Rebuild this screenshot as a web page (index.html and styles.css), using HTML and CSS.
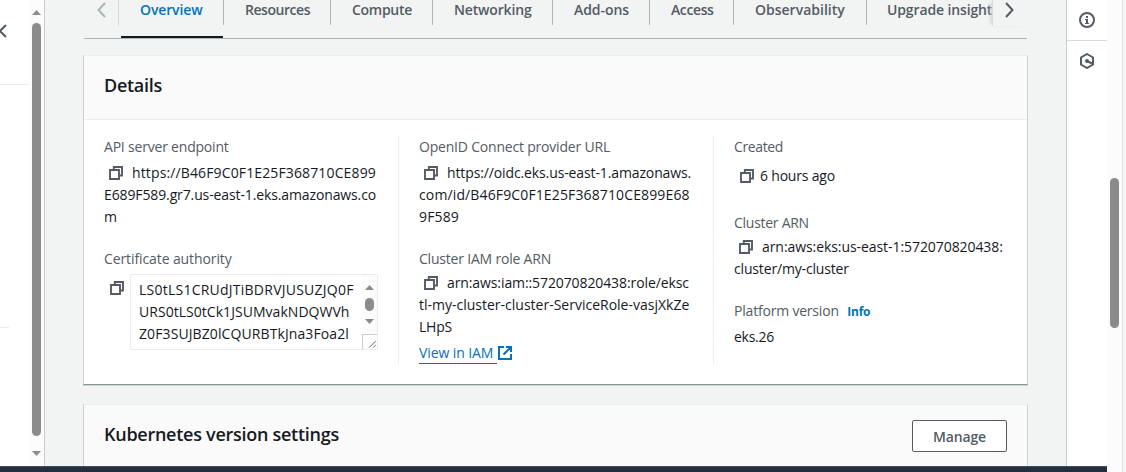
FILE: index.html
```
<!DOCTYPE html>
<html lang="en">
<head>
<meta charset="utf-8">
<title>Cluster details</title>
<link rel="stylesheet" href="styles.css">
</head>
<body>
<svg class="defs" aria-hidden="true">
  <symbol id="copy" viewBox="0 0 14 14"><path d="M1 4h9v9H1z M4.800 4V1H13v8.500h-3" fill="none" stroke="#545b64" stroke-width="1.900"/></symbol>
</svg>
<div class="app">
  <div class="workspace">
    <aside class="side">
      <div class="side-nav">
        <div class="side-head"><svg class="side-close" viewBox="0 0 9 16"><path d="M7 2L1 8l6 6" fill="none" stroke="#545b64" stroke-width="2"/></svg></div>
        <div class="side-body"></div>
      </div>
      <div class="side-scroll"><i class="arrow up"></i><i class="thumb"></i><i class="arrow down"></i></div>
    </aside>
    <main class="main">
      <nav class="tabs">
        <div class="tab-prev"><svg width="11" height="18" viewBox="0 0 11 18"><path d="M9 2L2.500 9 9 16" fill="none" stroke="#aab7b8" stroke-width="2"/></svg></div>
        <div class="tab-list">
          <a class="tab active w1 n13"><span>Overview</span></a>
          <a class="tab w2 n46"><span>Resources</span></a>
          <a class="tab w3 n30"><span>Compute</span></a>
          <a class="tab w4 n17"><span>Networking</span></a>
          <a class="tab w5 n07"><span>Add-ons</span></a>
          <a class="tab w6 n40"><span>Access</span></a>
          <a class="tab w7"><span>Observability</span></a>
          <a class="tab w8 n13"><span>Upgrade insights</span></a>
        </div>
        <div class="tab-next"><svg width="11" height="18" viewBox="0 0 11 18"><path d="M2 2l6.500 7L2 16" fill="none" stroke="#545b64" stroke-width="2"/></svg></div>
      </nav>
      <section class="card">
        <header class="card-head"><h2 class="n27">Details</h2></header>
        <div class="columns">
          <div class="col">
            <div class="label n20">API server endpoint</div>
            <div class="value">
              <div class="line p13"><svg class="copy"><use href="#copy"/></svg>https://B46F9C0F1E25F368710CE899</div>
              <div class="line n12">E689F589.gr7.us-east-1.eks.amazonaws.co</div>
              <div class="line">m</div>
            </div>
            <div class="label next n10">Certificate authority</div>
            <div class="cert">
              <svg class="copy"><use href="#copy"/></svg>
              <div class="area">
                <div class="area-text">
                  <div class="line p24">LS0tLS1CRUdJTiBDRVJUSUZJQ0F</div>
                  <div class="line p04">URS0tLS0tCk1JSUMvakNDQWVh</div>
                  <div class="line p10">Z0F3SUJBZ0lCQURBTkJna3Foa2l</div>
                </div>
                <div class="area-scroll"><i class="arrow up"></i><i class="thumb"></i><i class="arrow down"></i>
                  <svg class="grip" viewBox="0 0 15 15"><path d="M6.500 13.500l7-7M11 13.500l2.500-2.500" fill="none" stroke="#555" stroke-width="1"/></svg>
                </div>
              </div>
            </div>
          </div>
          <div class="col">
            <div class="label n20">OpenID Connect provider URL</div>
            <div class="value">
              <div class="line n12"><svg class="copy"><use href="#copy"/></svg>https://oidc.eks.us-east-1.amazonaws.</div>
              <div class="line p13">com/id/B46F9C0F1E25F368710CE899E68</div>
              <div class="line p13">9F589</div>
            </div>
            <div class="label next n20">Cluster IAM role ARN</div>
            <div class="value tight">
              <div class="line n10"><svg class="copy"><use href="#copy"/></svg>arn:aws:iam::572070820438:role/eksc</div>
              <div class="line">tl-my-cluster-cluster-ServiceRole-vasjXkZe</div>
              <div class="line n20">LHpS</div>
            </div>
            <a class="iam"><span class="n10">View in IAM</span><svg viewBox="0 0 14 14"><path d="M6 1H1v12h12V8M8 1h5v5M12.500 1.500L5.500 8.500" fill="none" stroke="#0073bb" stroke-width="2"/></svg></a>
          </div>
          <div class="col">
            <div class="label n37">Created</div>
            <div class="value age"><div class="line n20"><svg class="copy"><use href="#copy"/></svg>6 hours ago</div></div>
            <div class="label arn n27">Cluster ARN</div>
            <div class="value tight">
              <div class="line n07"><svg class="copy"><use href="#copy"/></svg>arn:aws:eks:us-east-1:572070820438:</div>
              <div class="line n17">cluster/my-cluster</div>
            </div>
            <div class="label next n20">Platform version <a class="info">Info</a></div>
            <div class="value"><div class="line n27">eks.26</div></div>
          </div>
        </div>
      </section>
      <section class="card second">
        <header class="card-head"><h2 class="n27">Kubernetes version settings</h2><button class="button n17">Manage</button></header>
      </section>
    </main>
    <aside class="tools">
      <div class="tool first"><svg width="16" height="16" viewBox="0 0 16 16"><circle cx="8" cy="8" r="7" fill="none" stroke="#545b64" stroke-width="2"/><path d="M7 4h2v2H7zM6 7h3v4h1v1H6v-1h1V8H6z" fill="#545b64"/></svg></div>
      <div class="tool"><svg width="16" height="16" viewBox="0 0 16 16"><path d="M8 1l6 3.500v7L8 15l-6-3.500v-7z" fill="none" stroke="#545b64" stroke-width="2"/><circle cx="8" cy="8" r="2" fill="#545b64"/><path d="M8 8l5 2.500" stroke="#545b64" stroke-width="2"/></svg></div>
    </aside>
    <div class="footer"></div>
  </div>
  <div class="page-scroll"><i class="thumb"></i></div>
  <div class="edge"></div>
</div>
</body>
</html>
```
FILE: styles.css
```
* { box-sizing: border-box; }
body { margin: 0; font: 14px/22px "Open Sans", "Noto Sans", sans-serif; color: #16191f; }
h2 { margin: 0; font-size: 18px; font-weight: 600; line-height: 22px; }
.defs { position: absolute; width: 0; height: 0; }
.app { display: flex; width: 1126px; height: 472px; overflow: hidden; background: #fff; }
.workspace { display: grid; grid-template: 466px 6px / 44px 1022px 41px; width: 1107px; }

/* letter spacing steps */
.n07 { letter-spacing: -.07px; }
.n10 { letter-spacing: -.1px; }
.n12 { letter-spacing: -.12px; }
.n13 { letter-spacing: -.13px; }
.n17 { letter-spacing: -.16px; }
.n20 { letter-spacing: -.2px; }
.n27 { letter-spacing: -.27px; }
.n30 { letter-spacing: -.29px; }
.n37 { letter-spacing: -.37px; }
.n40 { letter-spacing: -.4px; }
.n46 { letter-spacing: -.46px; }
.p04 { letter-spacing: .04px; }
.p10 { letter-spacing: .1px; }
.p13 { letter-spacing: .13px; }
.p24 { letter-spacing: .24px; }

/* scrollbar parts */
.arrow { flex: none; width: 9px; height: 5px; background: #8b8b8b; }
.arrow.up { clip-path: polygon(50% 0, 100% 100%, 0 100%); }
.arrow.down { clip-path: polygon(0 0, 100% 0, 50% 100%); }
.thumb { display: block; width: 9px; border-radius: 5px; background: #8b8b8b; }

.side { display: flex; }
.side-nav { width: 29px; }
.side-head { height: 85px; padding-top: 23px; border-bottom: 1px solid #eaeded; }
.side-close { display: block; width: 9px; height: 16px; margin-left: -1px; }
.side-body { width: 9px; height: 243px; border-bottom: 1px solid #eaeded; }
.side-scroll { width: 15px; padding: 10px 0 0 3px; background: #fcfcfc; }
.side-scroll .arrow { display: block; }
.side-scroll .thumb { height: 413px; margin: 8px 0 15px; }

.main { overflow: hidden; padding: 0 38px 0 39px; border-left: 1px solid #c8cccc; background: #f2f3f3; }
.tabs { display: flex; height: 39px; width: 943px; border-bottom: 1px solid #aab7b8; }
.tab-prev { width: 35px; height: 26px; padding: 1px 0 0 12px; border-right: 1px solid #d5dbdb; }
.tab-next { width: 35px; height: 26px; padding: 1px 0 0 11px; border-left: 1px solid #d5dbdb; box-shadow: -3px 0 4px -2px #ccd0d0; z-index: 1; }
.tab-prev svg, .tab-next svg { display: block; }
.tab-list { display: flex; width: 873px; overflow: hidden; padding-left: 2px; }
.tab { flex: none; height: 38px; color: #545b64; font-weight: 600; white-space: nowrap; }
.tab span { display: block; height: 25px; padding: 0 0 0 21px; line-height: 20px; border-right: 1px solid #aab7b8; }
.tab.active { color: #0073bb; background: linear-gradient(#16191f, #16191f) 0 100% / 102px 2px no-repeat; }
.tab.active span { padding-left: 19px; }
.w1 { width: 103px; }
.w2 { width: 107px; }
.w3 { width: 102px; }
.w4 { width: 120px; }
.w5 { width: 97px; }
.w6 { width: 84px; }
.w7 { width: 133px; }
.w8 { width: 145px; }
.tab.w8 span { padding-left: 20px; }

.card { height: 330px; width: 945px; margin: 16px 0 0 -1px; background: #fff; border: 1px solid #cbd0d0; border-top-color: #eaeded; border-bottom-color: #879596; box-shadow: 0 1px 0 #d0d5d5; }
.card-head { display: flex; justify-content: space-between; align-items: center; height: 64px; padding: 0 20px 5px; background: #fafafa; border-bottom: 1px solid #eaeded; }
.card.second { margin-top: 19px; }
.second .card-head { padding-bottom: 1px; }
.second h2 { margin-top: -4px; }
.button { width: 95px; height: 32px; padding: 0; border: 1px solid #545b64; border-radius: 2px; background: #fff; color: #545b64; font-family: inherit; font-size: 14px; font-weight: 600; }

.columns { display: grid; grid-template-columns: 315px 315px 313px; padding-top: 16px; }
.col { height: 228px; padding-left: 20px; border-right: 1px solid #eaeded; }
.col:last-child { border: 0; }
.label { height: 22px; color: #545b64; white-space: nowrap; }
.label.next { margin-top: 20px; }
.label.arn { margin-top: 25px; }
.value { padding-top: 4px; }
.value.tight { padding-top: 2px; }
.value.age { padding-top: 7px; }
.line { height: 22px; white-space: nowrap; }
.line .copy { margin: 0 9px 0 5px; vertical-align: -2px; }
.age .line .copy { margin: 0 6px; }
.copy { flex: none; width: 14px; height: 14px; }
.cert { display: flex; padding: 4px 0 0 6px; }
.cert .copy { margin-top: 7px; }
.area { display: flex; width: 248px; height: 76px; margin-left: 6px; border: 1px solid #eaeded; border-radius: 2px; }
.area-text { width: 231px; padding: 4px 0 0 8px; }
.area-scroll { display: flex; flex-direction: column; align-items: center; width: 15px; padding-top: 10px; background: #fcfcfc; }
.area-scroll .thumb { flex: none; height: 13px; margin: 8px 0; }
.grip { width: 15px; height: 15px; margin-top: auto; border: solid #ccc; border-width: 1px 0 0 1px; background: #fff; }
.iam { display: flex; align-items: center; height: 22px; margin-top: 4px; color: #0073bb; }
.iam span { width: 78px; line-height: 20px; border-bottom: 1px solid #0073bb; }
.iam svg { width: 14px; height: 14px; margin-left: 1px; }
.info { margin-left: 5px; color: #0073bb; font-size: 12px; font-weight: 700; }

.tools { border-left: 1px solid #c8cccc; background: #fff; }
.tool { height: 41px; padding: 12px; }
.tool.first { border-bottom: 1px solid #d5dbdb; }
.tool svg { display: block; }
.footer { grid-column: 1 / -1; background: #232f3e; border-top: 1px solid #40505c; }
.page-scroll { width: 15px; padding: 178px 0 0 3px; background: #fcfcfc; }
.page-scroll .thumb { height: 150px; }
.edge { width: 4px; background: #f7f7f7; border-left: 1px solid #dedede; }
```
